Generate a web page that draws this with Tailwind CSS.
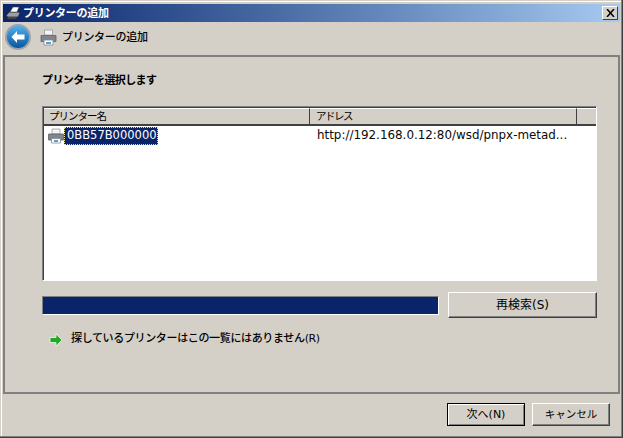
<!DOCTYPE html>
<html lang="ja">
<head>
    <meta charset="UTF-8">
    <script src="https://cdn.jsdelivr.net/npm/@tailwindcss/browser@4"></script>
    <title>プリンターの追加</title>
</head>
<body class="m-0 overflow-hidden">
    <div class="w-[623px] h-[438px] flex flex-col bg-[#d4d0c8] border-r border-b border-[#404040] font-['DejaVu_Sans','Noto_Sans_CJK_JP',sans-serif] text-[11px] leading-none text-black">
      <div class="flex flex-col flex-1 border-r border-b border-[#808080] min-h-0">
        <div class="flex flex-col flex-1 border-t border-l border-white mt-px ml-px min-h-0 pt-px pl-px pr-px">

          <!-- title bar -->
          <div class="h-[18px] flex items-center bg-gradient-to-r from-[#0a246a] to-[#a6caf0] pl-[2px] pr-[2px] mt-px shrink-0">
            <svg class="w-[16px] h-[16px] shrink-0" viewBox="0 0 16 16">
              <path d="M1 11l3-4h9l2 1-2 4H3z" fill="#9aa0a8" stroke="#222" stroke-width=".7"/>
              <path d="M5 7l3-5h6l-2 5z" fill="#fff" stroke="#444" stroke-width=".6"/>
              <path d="M3 12h9l-1 2H2z" fill="#444"/>
            </svg>
            <span class="ml-[2px] text-white font-bold text-[11px] tracking-[-0.3px]">プリンターの追加</span>
            <button class="ml-auto w-[16px] h-[14px] p-0 flex items-center justify-center bg-[#d4d0c8] border border-t-white border-l-white border-r-[#404040] border-b-[#404040]">
              <svg class="w-[9px] h-[8px]" viewBox="0 0 9 8"><path d="M1 0l7 8M8 0L1 8" stroke="#000" stroke-width="1.500" fill="none"/></svg>
            </button>
          </div>

          <!-- nav row -->
          <div class="h-[33px] flex items-center pb-[3px] shrink-0">
            <div class="w-[26px] h-[26px] ml-[2px] rounded-full border-2 border-[#9aa3ad] bg-gradient-to-b from-[#4fb0ee] to-[#07569c] flex items-center justify-center shrink-0">
              <svg class="w-[16px] h-[14px]" viewBox="0 0 16 14"><path d="M7 1L1.500 7 7 13V9.500h7.500v-5H7z" fill="#fff"/></svg>
            </div>
            <svg class="w-[17px] h-[17px] ml-[9px] shrink-0" viewBox="0 0 17 17">
              <path d="M4.500 1h8v5h-8z" fill="#f4f4f4" stroke="#999" stroke-width=".8"/>
              <path d="M1 6.500h15v6H1z" fill="#7f868c" stroke="#5d6368" stroke-width=".8"/>
              <path d="M4 11h9v5H4z" fill="#fff" stroke="#888" stroke-width=".8"/>
              <path d="M6 13h5v2H6z" fill="#4da3d8"/>
            </svg>
            <span class="ml-[5px] font-medium tracking-[-0.3px]">プリンターの追加</span>
          </div>

          <!-- main panel -->
          <div class="flex-1 min-h-0 border-2 border-[#808080] pl-[37px] pr-[21px] pt-[18px] flex flex-col">
            <h2 class="font-bold text-[11px] h-[12px] leading-[12px] tracking-[-0.6px]">プリンターを選択します</h2>

            <!-- list -->
            <div class="mt-[19px] h-[175px] bg-white border border-t-[#808080] border-l-[#808080] border-r-white border-b-white shrink-0">
              <div class="h-full border-t border-l border-[#404040] flex flex-col">
                <div class="h-[18px] flex bg-[#d4d0c8] border-b-2 border-[#404040] shrink-0">
                  <div class="w-[266px] flex items-center pl-[5px] border-r border-[#404040] border-t border-t-white text-[10.500px] tracking-[-1px]">プリンター名</div>
                  <div class="w-[267px] flex items-center pl-[6px] border-r border-[#404040] border-t border-t-white text-[10.500px] tracking-[-1.500px]">アドレス</div>
                  <div class="flex-1 border-t border-white"></div>
                </div>
                <div class="h-[19px] flex items-center pl-[4px] shrink-0">
                  <svg class="w-[16px] h-[16px] shrink-0" viewBox="0 0 16 16">
                    <path d="M4 1h8v5H4z" fill="#f4f4f4" stroke="#999" stroke-width=".8"/>
                    <path d="M.5 6h15v6H.5z" fill="#7f868c" stroke="#5d6368" stroke-width=".8"/>
                    <path d="M3.500 10.500h9V15h-9z" fill="#fff" stroke="#888" stroke-width=".8"/>
                    <path d="M6 12h4v2H6z" fill="#4da3d8"/>
                  </svg>
                  <span class="w-[94px] h-[18px] flex items-center pl-[2px] bg-[#0a246a] text-white text-[11.500px] border border-dotted border-[#e8e4a0] shrink-0">0BB57B000000</span>
                  <span class="ml-[159px] text-[#0a0a0a] text-[11.900px]">http://192.168.0.12:80/wsd/pnpx-metad...</span>
                </div>
              </div>
            </div>

            <!-- progress and search -->
            <div class="mt-[11px] flex items-center shrink-0">
              <div class="w-[397px] h-[19px] bg-[#0a246a] border border-t-[#808080] border-l-[#808080] border-r-white border-b-white shrink-0"></div>
              <button class="ml-[9px] w-[149px] h-[26px] bg-[#d4d0c8] border border-t-white border-l-white border-r-[#404040] border-b-[#404040] shadow-[inset_-1px_-1px_0_#808080] flex items-center justify-center text-[12px]">再検索(S)</button>
            </div>

            <!-- link -->
            <div class="mt-[14px] flex items-center h-[16px] shrink-0 pl-[7px]">
              <svg class="w-[14px] h-[14px] shrink-0" viewBox="0 0 14 14">
                <path d="M7 1l6 6-6 6V9.500H1v-5h6z" fill="#22a82a" stroke="#eef7e6" stroke-width=".8"/>
              </svg>
              <span class="ml-[8px] font-medium tracking-[-0.35px] -mt-[3px]">探しているプリンターはこの一覧にはありません(R)</span>
            </div>
          </div>

          <!-- footer buttons -->
          <div class="h-[42px] shrink-0 flex justify-end gap-[7px] pt-[9px] pr-[10px]">
            <button class="w-[78px] h-[23px] bg-[#d4d0c8] border border-black shadow-[inset_1px_1px_0_#fff,inset_-1px_-1px_0_#808080] flex items-center justify-center">次へ(N)</button>
            <button class="w-[78px] h-[23px] bg-[#d4d0c8] border border-t-white border-l-white border-r-[#404040] border-b-[#404040] shadow-[inset_-1px_-1px_0_#808080] flex items-center justify-center text-[10.500px]">キャンセル</button>
          </div>
        </div>
      </div>
    </div>
</body>
</html>
